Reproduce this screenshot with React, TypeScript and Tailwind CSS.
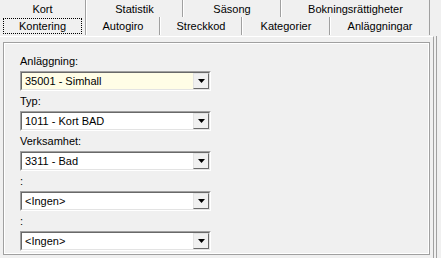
import React from "react";

const font = { fontFamily: '"Liberation Sans", Arial, sans-serif' };

function Combo({ value, yellow }: { value: string; yellow?: boolean }) {
  return (
    <div className="flex w-[191px] h-[20px] border border-t-[#a0a0a0] border-l-[#a0a0a0] border-r-white border-b-white">
      <div
        className={`flex flex-1 border border-t-[#696969] border-l-[#696969] border-r-[#e3e3e3] border-b-[#e3e3e3] ${
          yellow ? "bg-[#fffde6]" : "bg-white"
        }`}
      >
        <div className="flex-1 pl-[3px] text-[11px] leading-[16px] text-black">{value}</div>
        <div className="w-[16px] h-[16px] flex items-center justify-center bg-[#f0f0f0] border border-t-[#e3e3e3] border-l-[#e3e3e3] border-r-[#696969] border-b-[#696969]">
          <svg width="7" height="4" viewBox="0 0 7 4">
            <path d="M0 0H7L3.5 4Z" fill="#000" />
          </svg>
        </div>
      </div>
    </div>
  );
}

function Field({ label, value, yellow }: { label: string; value: string; yellow?: boolean }) {
  return (
    <div className="flex flex-col">
      <div className="h-[20px] text-[11px] leading-[20px] text-black">{label}</div>
      <Combo value={value} yellow={yellow} />
    </div>
  );
}

export default function App() {
  const row1 = [
    { t: "Kort", w: "w-[86px]" },
    { t: "Statistik", w: "w-[97px]" },
    { t: "Säsong", w: "w-[98px]" },
    { t: "Bokningsrättigheter", w: "w-[149px]" },
  ];
  const row2 = [
    { t: "Autogiro", w: "w-[74px]" },
    { t: "Streckkod", w: "w-[82px]" },
    { t: "Kategorier", w: "w-[88px]" },
    { t: "Anläggningar", w: "w-[100px]" },
  ];
  return (
    <div className="w-[441px] h-[258px] bg-[#f0f0f0] overflow-hidden flex flex-col text-black" style={font}>
      <div className="flex h-[17px]">
        {row1.map((r, i) => (
          <div
            key={r.t}
            className={`${r.w} flex items-center justify-center text-[11px] leading-[14px] border-r border-r-[#a0a0a0] ${
              i > 0 ? "border-l border-l-white" : ""
            }`}
          >
            {r.t}
          </div>
        ))}
        <div className="flex-1" />
      </div>
      <div className="flex h-[18px]">
        <div className="w-[86px] px-[3px] py-[1px] flex border-r border-r-[#a0a0a0]">
          <div className="flex-1 flex items-center justify-center text-[11px] border border-dotted border-black">
            Kontering
          </div>
        </div>
        {row2.map((r) => (
          <div
            key={r.t}
            className={`${r.w} flex items-center justify-center text-[11px] border-l border-l-white border-r border-r-[#a0a0a0]`}
          >
            {r.t}
          </div>
        ))}
        <div className="flex-1" />
      </div>
      <div className="flex-1 flex pt-[1px]">
        <div className="w-[434px] flex flex-col border-t border-t-white border-r border-r-[#a0a0a0] px-[3px] pt-[5px]">
          <div className="flex-1 border border-[#a0a0a0] mb-[3px] flex flex-col">
            <div className="flex-1 border border-white flex flex-col pl-[15px] pt-[7px]">
              <Field label="Anläggning:" value="35001 - Simhall" yellow />
              <Field label="Typ:" value="1011 - Kort BAD" />
              <Field label="Verksamhet:" value="3311 - Bad" />
              <Field label=":" value="<Ingen>" />
              <Field label=":" value="<Ingen>" />
            </div>
          </div>
        </div>
        <div className="flex-1 border-l border-l-[#a0a0a0] ml-[2px]" />
      </div>
    </div>
  );
}
